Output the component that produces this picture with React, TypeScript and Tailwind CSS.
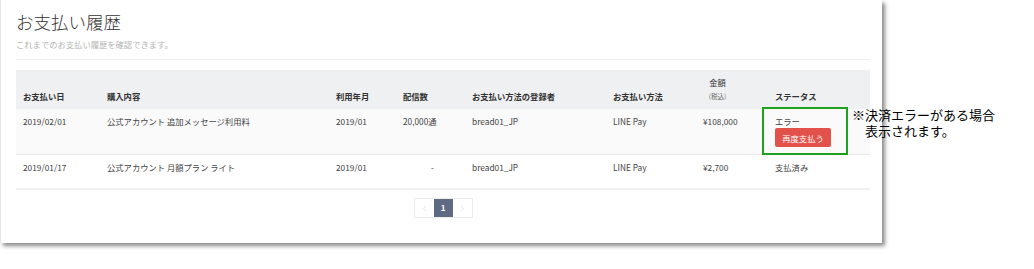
import { ChevronLeft, ChevronRight } from "lucide-react";

const cols = "grid grid-cols-[84px_229px_67px_69px_141px_90px_72px_102px]";
const cell = "pl-[7px]";

type Row = {
  date: string;
  item: string;
  month: string;
  count: string;
  owner: string;
  method: string;
  amount: string;
  error?: boolean;
};

const rows: Row[] = [
  {
    date: "2019/02/01",
    item: "公式アカウント 追加メッセージ利用料",
    month: "2019/01",
    count: "20,000通",
    owner: "bread01_JP",
    method: "LINE Pay",
    amount: "¥108,000",
    error: true,
  },
  {
    date: "2019/01/17",
    item: "公式アカウント 月額プラン ライト",
    month: "2019/01",
    count: "-",
    owner: "bread01_JP",
    method: "LINE Pay",
    amount: "¥2,700",
  },
];

export default function App() {
  return (
    <div className="relative h-[269px] w-[1034px] bg-white font-['Noto_Sans_CJK_JP','Noto_Sans',sans-serif]">
      <div className="h-[243px] w-[882px] border-l border-[#e6e6e6] bg-white pl-[15px] pr-[12px] pt-[9px] shadow-[3px_3px_4px_rgba(0,0,0,0.45)]">
        <h1 className="text-[17.5px] font-light leading-[26px] text-[#333]">お支払い履歴</h1>
        <p className="mt-[3px] text-[8.3px] leading-[12px] text-[#b4b4b4]">これまでのお支払い履歴を確認できます。</p>
        <div className="mt-[9px] h-px bg-[#efefef]" />

        <div className="mt-[10px] text-[8.3px] leading-[12px] text-[#444]">
          <div className={`${cols} h-[39px] items-end bg-[#eff0f2] pb-[7px] font-bold text-[#333]`}>
            <div className={cell}>お支払い日</div>
            <div className={cell}>購入内容</div>
            <div className={cell}>利用年月</div>
            <div className={cell}>配信数</div>
            <div className={cell}>お支払い方法の登録者</div>
            <div className={cell}>お支払い方法</div>
            <div className={cell}>
              <div className="flex w-[29px] flex-col items-center">
                <span className="mb-[2px] font-normal">金額</span>
                <span className="text-[6.5px] font-normal text-[#666]">(税込)</span>
              </div>
            </div>
            <div className={cell}>ステータス</div>
          </div>

          {rows.map((r) => (
            <div
              key={r.date}
              className={`${cols} pt-[6px] ${
                r.error ? "h-[46px] border-b border-[#e8e8e8] bg-[#fafafa]" : "h-[35px] border-b-2 border-[#f1f1f1]"
              }`}
            >
              <div className={cell}>{r.date}</div>
              <div className={cell}>{r.item}</div>
              <div className={cell}>{r.month}</div>
              <div className={r.count === "-" ? "pl-[35px]" : cell}>{r.count}</div>
              <div className={cell}>{r.owner}</div>
              <div className={cell}>{r.method}</div>
              <div className={cell}>{r.amount}</div>
              <div className={cell}>
                {r.error ? (
                  <div className="flex flex-col items-start">
                    <span>エラー</span>
                    <button className="mt-[1px] h-[19px] w-[56px] rounded-[2px] bg-[#e2524b] text-[8.3px] text-white">
                      再度支払う
                    </button>
                  </div>
                ) : (
                  "支払済み"
                )}
              </div>
            </div>
          ))}
        </div>

        <div className="mt-[8px] flex justify-center">
          <div className="flex h-[20px] border border-[#ececec] text-[8px]">
            <span className="flex w-[19px] items-center justify-center text-[#cdd0d6]">
              <ChevronLeft size={9} strokeWidth={1.5} />
            </span>
            <span className="flex w-[19px] items-center justify-center bg-[#5f6a85] font-bold text-white">1</span>
            <span className="flex w-[19px] items-center justify-center text-[#cdd0d6]">
              <ChevronRight size={9} strokeWidth={1.5} />
            </span>
          </div>
        </div>
      </div>

      {/* annotation overlay */}
      <div className="absolute left-[762px] top-[107px] h-[48px] w-[86px] border-2 border-[#1ea21e]" />
      <p className="absolute left-[852px] top-[107px] whitespace-pre text-[13px] leading-[16px] text-black">
        {"※決済エラーがある場合\n　表示されます。"}
      </p>
    </div>
  );
}
